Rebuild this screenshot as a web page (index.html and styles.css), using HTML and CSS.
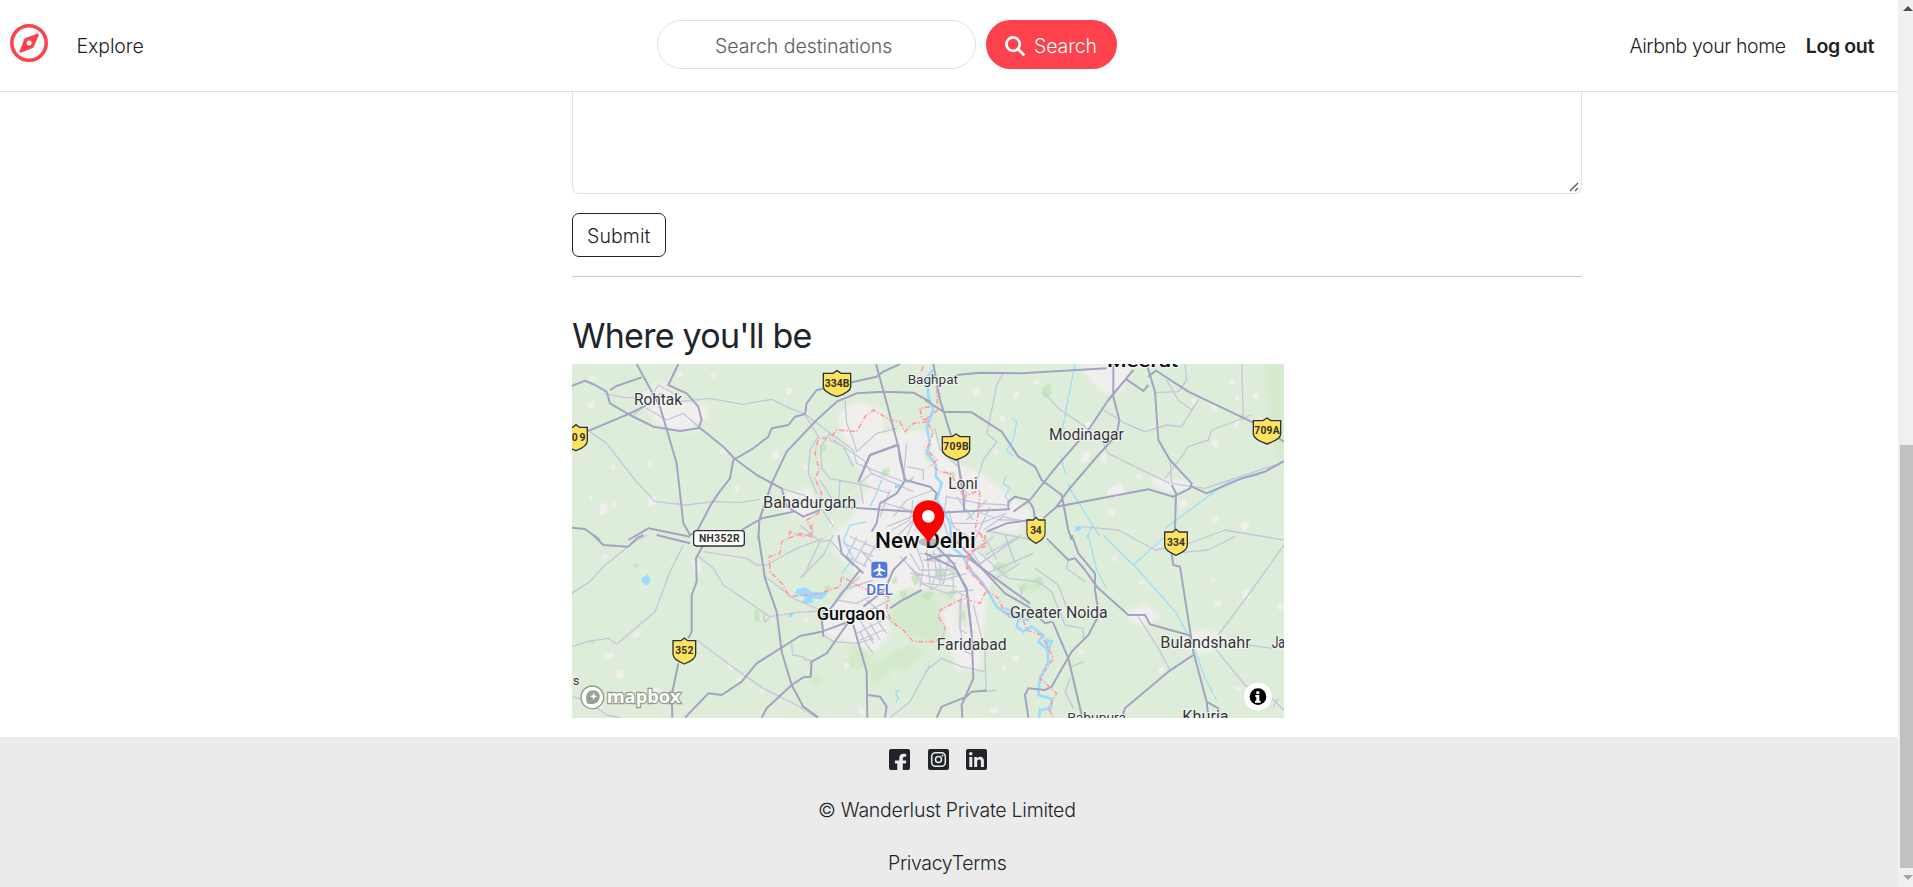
FILE: index.html
```html
<!DOCTYPE html>
<html lang="en">
<head>
<meta charset="utf-8">
<title>Wanderlust</title>
<link rel="stylesheet" href="styles.css">
</head>
<body>
<div class="window">
<div class="page">
  <nav class="navbar">
    <div class="nav-left">
      <svg class="brand" viewBox="0 0 38 38"><circle cx="19" cy="19" r="17.2" fill="none" stroke="#fe424d" stroke-width="3.6"/><path fill="#fe424d" fill-rule="evenodd" d="M27 9.700c1.200-.5 2.200.5 1.700 1.700l-5 11.700a2 2 0 0 1-1 1L11.300 28.600c-1.200.5-2.200-.5-1.700-1.700l4.800-11.800a2 2 0 0 1 1-1zM19.200 16.600a2.500 2.500 0 1 0 .01 0z"/></svg>
      <a class="explore">Explore</a>
    </div>
    <form class="search">
      <div class="search-box"><span>Search destinations</span></div>
      <div class="search-btn"><svg viewBox="0 0 20 20"><circle cx="8.100" cy="8.100" r="6.700" fill="none" stroke="#fff" stroke-width="2.700"/><path d="M13 13l5.500 5.500" stroke="#fff" stroke-width="2.900" stroke-linecap="round"/></svg><span>Search</span></div>
    </form>
    <div class="nav-right"><a class="home">Airbnb your home</a><a class="logout">Log out</a></div>
  </nav>
  <main class="content">
    <div class="comment"><svg viewBox="0 0 10 10"><path d="M1 9l8-8M6 9l3-3" stroke="#555" stroke-width="1.300"/></svg></div>
    <div class="submit"><span>Submit</span></div>
    <hr>
    <h3><span>Where you'll be</span></h3>
    <svg class="map" viewBox="0 0 2136 1062">
      <defs>
        <path id="shield" d="M-41-32L-12-32L0-40L12-32L41-32L41 8C41 22 20 31 0 38C-20 31-41 22-41 8Z"/>
        <path id="shield-s" d="M-34-32L-10-32L0-40L10-32L34-32L34 8C34 22 18 31 0 38C-18 31-34 22-34 8Z"/>
      </defs>
      <rect width="2136" height="1062" fill="#deedd9"/>
      <!-- built-up areas -->
      <g class="urban soft">
        <path transform="translate(684 228)" d="M140 30L190 0L300-30L400-20L450 60L540 100L660 190L700 220L650 280L560 270L520 330L590 370L560 460L540 690L470 690L440 560L400 470L330 440L250 470L270 580L220 640L140 600L60 580L80 500L150 460L180 410L110 340L90 290L150 240L210 140Z"/>
        <path d="M210 90L270 50L320 110L400 120L410 170L350 180L390 200L340 205L250 175ZM1520 0H1680L1650 80L1600 90L1560 50ZM1830 810L1900 795L1960 820L1940 860L1870 870L1830 850ZM1660 742L1720 720L1770 755L1730 785L1680 775ZM1750 340L1840 350L1880 370L1800 385L1740 365ZM640 390L710 370L740 420L710 470L630 440ZM800 150L850 110L940 140L930 220L850 260L810 220Z"/>
      </g>
      <g class="wood soft">
        <path transform="translate(684 228)" d="M290 490L350 450L440 440L480 480L420 520L440 580L390 610L330 590L270 540ZM240 655L330 610L380 640L320 690L240 690ZM370 10L400 30L390 90L375 60ZM590 380L620 370L630 400L600 410ZM240 90L270 80L260 110ZM160 610L230 650L180 690L130 680ZM650 445L700 410L730 440L700 460ZM410 380L440 390L430 420L410 410ZM470 500L510 490L500 570L470 550Z"/>
        <path d="M2080 0H2136V330L2100 220ZM730 930L750 945L760 920L740 970L710 950ZM880 900L930 890L960 930L900 960Z"/>
      </g>
      <g class="grove">
        <path d="M1412 70L1435 55L1440 90L1420 105L1408 90ZM545 740L560 735L564 770L550 775ZM45 830L70 825L65 842ZM182 604l12-8 8 8-8 8-12-2z"/>
        <path transform="translate(684 228)" d="M330 410l25-15 5 30-15 12zM405 395l20-15 12 20-12 18-15-4zM575 385l20-20 30 12-18 22zM245 90l24-8-4 24-20 4zM70 440l20-6 4 16-20 4zM275 420l14-12 4 20-14 4zM440 100l20-6 8 14-20 4zM655 440l20-10 4 20-18 4zM300 455l18-4 2 24-16 4zM445 385l22-4-2 18-16 4zM700 420l20-12 14 20-20 14zM60 20l20-8 0 18-14 6zM360 470l24-16 22 6-18 20zM440 460l20-14 10 14-20 18zM480 520l14-8 4 26-14 4z"/>
      </g>
      <g class="urban">
        <path d="M45 115l20-5 2 22-18 4zM85 420l22-4-3 34-24 4zM122 418l12-7 0 18-10 4zM230 395l22 5-2 20-22 6zM600 265l20-12 2 28-20 6zM640 75l20-4 0 16-14 6zM415 30l14-5-2 16-10 2zM225 290l15 4-5 16-8-3zM120 300l10 5-3 12-10-3zM490 365l14 4-8 16-8-4zM695 300l14 8-6 12-10-6zM50 35l22 3-4 10-16 2zM320 20l12 6-6 14-12-3zM840 150l15-8-2 26-14 2zM770 470l14-4 0 20-12 4zM445 255l14 2-2 14-12-3zM55 395l8 4-2 10-8-2z"/>
        <path transform="translate(1059 -12)" d="M140 85l22-5 3 22-18 10zM265 100l20-8-3 20-15 5zM225 165l16 2-2 20-14-4zM325 60l18-4 0 16-14 3zM480 190l18-8-2 25-14 5zM470 280l25-8-4 30-20 8zM530 285l14-6 2 28-16 4zM800 115l16-2-3 20-12-2zM860 135l16 5-2 16-14-2zM930 110l10-7 4 20-12-3zM860 240l22 0-3 24-18-5zM930 185l14-4-3 18-12 5zM550 385l35-15 18 25-30 18-26-8zM760 425l18-8 12 22-22 8zM550 445l18 4 0 18-18-4zM860 470l18-6 2 20-16 6zM945 490l20-6 10 16-22 12zM500 60l12-8 0 20-8 0zM630 345l20-4 0 18-16-2zM910 60l20-4-3 18-14-2zM985 100l18-2-3 20-15-2zM205 270l12-5 2 16-12 4z"/>
        <path transform="translate(-6 513)" d="M98 58l18 2-4 12-14-2zM190 295l16-10 5 16-20 8zM105 355l24-2 6 14-28 6zM140 410l22-4-2 24-20 0zM500 430l14-4-2 18-14 0zM365 80l22-6 8 30-20 12zM472 390l16-3 2 14-12 4zM822 385l18-2-4 18-14 2zM1010 120l16-3-2 14-12 3zM570 465l18-4-8 16-12-4zM865 510l18 12 0 18-18-8zM250 460l20-2-3 12-17 2zM700 250l14-3 0 14-12-2zM85 510l12-5 5 14-15 6z"/>
        <path transform="translate(1059 513)" d="M640 140l16-5 2 10-16 4zM560 65l16-6 0 20-12-2zM950 170l22-10 5 28-22 5zM870 200l18-6-3 20-18 3zM700 400l16-5-2 20-12-2zM260 365l20-4 2 18-16 2zM195 520l20-8 5 20-22 6zM460 345l14 0 4 12-16 0zM230 395l12-4 5 16-14 0zM860 470l12-5 0 20-10 4zM1055 210l20-8 0 26-14-4zM860 130l14 4-4 10-12-4zM930 455l20 2-3 10-17 0z"/>
      </g>
      <!-- rivers and lakes -->
      <g class="lake">
        <path d="M210 640L222 636L226 630L232 640L236 642L230 660L222 664L208 652ZM675 674L700 670L720 685L770 685L750 706L720 704L725 716L700 720L690 714L700 700L668 690ZM650 750L662 746L662 760L650 760ZM1510 490q10-10 20 0q-5 15-20 10Z"/>
        <path d="M325 120L345 105L335 125L318 130ZM285 135L300 130L300 142L285 145Z" transform="translate(684 228)"/>
      </g>
      <g class="river">
        <path stroke-width="8" transform="translate(684 228)" d="M400-210L382-190L385-130L400-90L380-40L390 10L380 40L408 75L408 110L425 130L410 180L430 210L450 250L455 320L490 350L510 390L545 425L570 465L590 500L630 530L690 540"/>
        <path stroke-width="8" transform="translate(1059 513)" d="M240 220L285 240L275 275L295 290L320 275L355 300L340 320L370 345L380 320L365 315L370 380L345 430L340 480L380 492L378 520L345 525L340 560"/>
        <path stroke-width="3.500" transform="translate(1059 -12)" d="M450 10L408 230M408 288L420 340M428 370L440 395L525 530M260 175L275 185L265 240L245 270L265 290M245 345L235 370L255 385L240 410L260 430M1005 345L910 365L720 505M505 490L485 535"/>
        <path stroke-width="3.500" transform="translate(1059 513)" d="M490 0L515 105L545 160M535 0L640 105L755 235L805 330L840 430L875 495M720 5L625 90"/>
        <path stroke-width="4" transform="translate(684 228)" d="M200 245L150 255L130 300L160 355L125 400M245 120L230 160L210 200"/>
        <path stroke-width="4" d="M968 980l10 0-6 12 8 10-8 12"/>
      </g>
      <!-- local roads -->
      <g class="minor">
        <path transform="translate(-6 -12)" d="M100 100L160 112L240 115L265 75L320 105M190 165L270 100L330 125L420 115L520 133L605 118L660 145L705 162L760 205L850 270L860 310L960 350L1000 365M60 215L110 250L195 360L255 425L350 435L430 425L510 428L570 418M825 120L830 190L850 240L860 275L920 220L980 205M780 220L752 260L755 325L780 355L880 375L960 400M705 165L745 230L720 270L715 340L740 400M635 385L700 405L750 440L790 500M230 145L290 180L340 160L385 200M810 360L805 440"/>
        <path transform="translate(1059 -12)" d="M235 40L215 75L200 150L185 220L215 245L175 300L155 365M360 100L400 145L480 200L535 250L550 280L640 325L735 370M780 12L785 60L760 95L690 98M950 12L955 180M725 60L760 120L800 150L820 120L770 200L725 195L660 215L600 190L535 150M720 355L770 290L790 260L850 240L860 210L980 165M740 370L840 385L960 345L1050 315M740 370L735 300L705 250M30 205L45 270L100 320L110 400M470 500L580 510L690 570L780 555L900 510L1077 540"/>
        <path transform="translate(-6 513)" d="M5 175L60 140L100 95L180 30L230 0M340 30L300 110L255 230L140 328L115 310L50 320L5 335M380 60L430 100L460 150L600 245L680 232L800 225M400 50L530 70L560 90L590 90L680 40L760 10M600 245L585 262L580 235M580 120L670 190L750 225M380 315L480 390L580 460L680 510L740 548M665 325L668 360L700 365L705 375L720 375L720 390M690 130L760 60L790 0M755 230L760 300L790 320L860 325L910 310M870 290L890 330L910 355M1080 390L1020 500L960 548M5 485L50 495L110 540L150 548"/>
        <path transform="translate(1059 513)" d="M880 300L970 180L1077 30M870 340L960 450L1040 490L1077 525M1060 490L1045 515M640 245L700 340L735 405M740 55L850 45L930 5M970 330L1040 340M180 60L290 0M160 50L250 130L340 140L380 170L420 270L475 280L475 310M330 100L400 150L430 230L510 250M240 0L270 85M290 155L290 180M440 395L475 380M435 430L420 470L445 520M0 410L50 370L110 395L180 410M110 180L105 280L120 350L145 360M145 210L180 350L183 465L140 470M215 465L180 470M430 70L425 100L480 140"/>
        <path transform="translate(684 228)" d="M100 0L190 60L215 100L340 155M160 80L130 20L90 0M215 100L180 130L190 190M310 120L320 10M370 120L370 90L320 80M270 150L240 230M240 185L340 215M280 230L320 180L400 150M275 270L330 240L340 180M300 200L350 220L320 290M260 260L360 220M280 300L340 240L410 250M440 170L540 190L620 195M445 210L460 260L520 300M490 210L500 160L480 110M500 240L560 180M520 210L600 240L660 240M450 250L540 250L620 220M550 270L610 230L700 250M440 165L430 240L450 310M470 170L520 240M570 200L520 310M570 275L700 300M300 350L350 400L430 420L500 400M330 340L360 390L450 390M320 370L370 430L470 440M350 320L370 380L360 440M380 330L390 430M400 330L410 400L390 450M420 330L420 430M450 340L430 430L390 450M360 340L460 350M370 360L470 370M330 400L400 410L480 400M460 400L460 450L500 470M360 430L440 460L520 450M540 370L600 330L660 290M500 350L580 290M530 380L640 300M560 400L700 340M580 420L660 370M520 340L550 390M560 300L590 360M130 310L220 350M150 290L240 330M120 340L200 380M170 290L140 350M200 300L160 370M230 310L190 380M180 330L230 380M0 255L60 305L90 300L160 380M60 305L10 410M60 120L110 200L170 205M100 500L120 460L180 410M110 480L170 490L210 470M130 450L220 420M140 540L230 500L270 480M200 480L270 540M170 580L250 540M180 600L250 570M210 550L240 600M190 560L220 600M230 540L260 580M180 540L220 610M480 480L480 570L500 580"/>
      </g>
      <!-- highways -->
      <g class="major">
        <path transform="translate(-6 -12)" d="M200 12L270 140L320 310L340 490L360 525L380 515L425 430L445 400L480 355L490 300L550 265L595 230L605 205L655 195L675 170L705 162L710 130L740 90L920 50L940 35L990 12M5 78L45 62L75 75L110 95L120 130L180 165L250 200L330 213L385 205L395 180L385 140L350 100L295 75L325 12M120 90L140 78L215 52M50 215L180 160L240 130M385 200L410 220L460 260L495 297L560 345L635 385L650 440L700 470L750 450M565 540L568 480L605 370L650 275L740 180L800 125L860 100L940 95L1030 98L1080 125M918 12L945 110L985 260L1005 360M865 365L900 285L980 255M5 503L45 507L90 540M175 540L235 505L360 530M515 510L575 475L670 455"/>
        <path transform="translate(1059 -12)" d="M95 45L165 38L290 40L545 25M25 12L45 120L95 280L115 400L118 455M0 120L55 155L140 157L230 215L280 290L330 320L350 360L410 405L430 510L440 540M625 30L550 120L490 210L390 325L315 420L265 455M565 12L565 110L583 180L575 225L520 285L430 390L395 440M665 12L690 95L700 240L735 300L800 370L795 385L745 410L670 388L395 440L355 475M690 30L790 95L990 190L1077 245M1077 303L1020 335L950 355L845 400L800 380M600 55L655 93L670 75M670 50L695 30M740 375L753 400L750 510M250 450L250 425L270 410L310 420L325 445L330 480"/>
        <path transform="translate(-6 513)" d="M70 0L100 30L175 35L200 10L220 0M260 0L360 25M400 30L378 70L380 140L365 180L365 290L355 310M325 385L305 480L307 548M565 0L585 130L620 230L635 350L665 450L700 515L745 548M345 548L415 475L455 480L515 440L560 385L690 303L755 290L850 255M575 548L590 520L665 450L700 427L722 425L725 380L770 355L850 240M850 270L890 410L892 548M895 480L930 485L950 515L945 548"/>
        <path transform="translate(1059 513)" d="M365 10L430 75L450 70L480 105L515 155L610 240L660 240L675 268L800 303M440 0L460 55L510 115L510 165L522 240L490 300L440 350L405 410L380 455L360 465L310 460L300 480L310 548M740 55L745 90L765 95L805 350L845 500L880 520L885 548M845 500L850 548M805 360L730 410L600 520L590 548M0 55L90 100L125 160L140 300L145 430L110 510L112 548M185 467L140 470L125 485L50 515L35 548M95 20L240 175L310 215L360 265L380 260M383 260L430 370L470 540"/>
        <path transform="translate(684 228)" d="M70 590L65 540L180 390M115 285L125 340L190 400M175 125L210 45L295 15L300 60L315 120L390 140L410 160L405 180M315 122L290 160L240 190L230 250L215 275M110 200L340 215M410 218L630 208M560 275L620 250L690 240M365 450L300 485L270 505M380 360L430 345L500 350L620 440L690 490M320 350L280 390L255 450L190 500M410 320L460 370L500 450L515 580"/>
      </g>
      <!-- state border -->
      <g class="bound">
        <path transform="translate(-6 -12)" d="M1060 20L1050 40M1080 140L1050 145L1055 175L1080 185L1030 190L1005 215L990 185L960 180L910 150L885 170L860 215L800 210L780 235L745 235L735 280L748 330L735 355L755 400L745 460L710 480L730 520L700 530L660 515L655 540"/>
        <path transform="translate(1059 -12)" d="M35 85L38 150L0 180L25 215L5 270L35 300L20 315L45 335L75 340L95 370L115 410L165 390L160 460L150 510L185 535"/>
        <path transform="translate(684 228)" d="M540 280L555 310L520 330L500 370L560 450L540 490L490 475L420 510L415 530L435 560L430 590L400 605L340 605L310 570L275 545L260 510L265 470L190 445L125 410L120 440L60 460L-30 470L-55 430L-90 395L-92 350L-60 340L-55 305L0 280L35 290L35 250"/>
        <path transform="translate(1059 513)" d="M180 0L180 35L130 50L125 100L190 170L220 190L240 235L290 240L305 285L350 300L385 370L345 430L395 475L370 520L385 548"/>
      </g>
      <!-- route badges -->
      <g class="badge">
        <g transform="translate(795 60)"><use href="#shield"/><text x="-37" y="9" textLength="74">334B</text></g>
        <g transform="translate(6 222)"><use href="#shield-s" x="6"/><text x="-30" y="9" textLength="64">709</text></g>
        <g transform="translate(1152 250)"><use href="#shield"/><text x="-38" y="9" textLength="76">709B</text></g>
        <g transform="translate(2085 202)"><use href="#shield"/><text x="-38" y="9" textLength="76">709A</text></g>
        <g transform="translate(1392 500)"><use href="#shield-s" transform="scale(.8 1)"/><text x="-17" y="9" textLength="34">34</text></g>
        <g transform="translate(1812 536)"><use href="#shield-s"/><text x="-27" y="9" textLength="54">334</text></g>
        <g transform="translate(337 862)"><use href="#shield-s"/><text x="-27" y="9" textLength="54">352</text></g>
        <rect x="365" y="500" width="152" height="46" rx="8" class="plate"/><text x="381" y="533" textLength="122">NH352R</text>
      </g>
      <!-- place names -->
      <g class="town">
        <text x="186" y="124" textLength="144" lengthAdjust="spacingAndGlyphs">Rohtak</text>
        <text x="1007" y="60" textLength="151" lengthAdjust="spacingAndGlyphs" font-size="41">Baghpat</text>
        <text x="1431" y="227" textLength="224" lengthAdjust="spacingAndGlyphs">Modinagar</text>
        <text x="1129" y="375" textLength="88" lengthAdjust="spacingAndGlyphs">Loni</text>
        <text x="573" y="431" textLength="280" lengthAdjust="spacingAndGlyphs">Bahadurgarh</text>
        <text x="1314" y="763" textLength="293" lengthAdjust="spacingAndGlyphs">Greater Noida</text>
        <text x="1094" y="857" textLength="210" lengthAdjust="spacingAndGlyphs">Faridabad</text>
        <text x="1765" y="853" textLength="271" lengthAdjust="spacingAndGlyphs">Bulandshahr</text>
        <text x="2099" y="853" textLength="100" lengthAdjust="spacingAndGlyphs">Jahan</text>
        <text x="1486" y="1073" textLength="176" lengthAdjust="spacingAndGlyphs" font-size="41">Rabupura</text>
        <text x="1831" y="1073" textLength="139" lengthAdjust="spacingAndGlyphs">Khurja</text>
        <text x="2" y="962" font-size="39">s</text>
      </g>
      <g class="city">
        <text x="1605" y="10" textLength="214" lengthAdjust="spacingAndGlyphs" font-size="56">Meerut</text>
        <text x="734" y="767" textLength="206" lengthAdjust="spacingAndGlyphs" font-size="53">Gurgaon</text>
        <text x="909" y="551" textLength="302" lengthAdjust="spacingAndGlyphs" font-size="66">New Delhi</text>
      </g>
      <rect x="898" y="593" width="48" height="48" rx="9" fill="#5379d8"/><path fill="#fff" d="M922 599c3 0 3 3 3 7v6l15 8v4l-15-4v9l6 4v3l-9-2-9 2v-3l6-4v-9l-15 4v-4l15-8v-6c0-4 0-7 3-7z"/>
      <text class="airport" x="883" y="693" textLength="80" lengthAdjust="spacingAndGlyphs">DEL</text>
      <!-- location marker -->
      <ellipse cx="1070" cy="534" rx="30" ry="13" fill="#555" opacity=".35"/>
      <path fill="#f00" d="M1070 409C1044 409 1022 430 1022 457C1022 490 1052 508 1070 536C1088 508 1117 490 1117 457C1117 430 1096 409 1070 409Z"/><circle cx="1069" cy="457" r="19" fill="#fff"/>
      <g class="logo"><circle cx="61" cy="1000" r="34" fill="#fff" stroke="#8d9b89" stroke-width="4"/><path fill="#96a391" d="M45 1018C38 994 45 979 63 979C91 979 90 1018 61 1020C52 1021 47 1019 45 1018Z"/><path fill="#fff" d="M65 985l3 9 9 3-9 3-3 9-3-9-9-3 9-3z"/><text x="104" y="1016" textLength="222" lengthAdjust="spacingAndGlyphs">mapbox</text></g>
      <circle cx="2058" cy="998" r="42" fill="#fff"/><circle cx="2058" cy="998" r="25"/><path fill="#fff" d="M2053 982h9v8h-9zM2050 993h12v17h4v6h-17v-6h4v-11h-3z"/>
    </svg>
  </main>
  <footer>
    <div class="social">
      <svg viewBox="0 0 21 21"><path fill="#212529" fill-rule="evenodd" d="M2 0h17q2 0 2 2v17q0 2-2 2h-5.200v-6.500h3l.5-3h-3.500V9.800c0-1.500.7-2.100 2.200-2.100h1.200V5c-4.700-1-6.900.3-6.900 4.300v2.200H5.900v3h2.400V21H2q-2 0-2-2V2q0-2 2-2z"/></svg>
      <svg viewBox="0 0 21 21"><rect width="21" height="21" rx="2" fill="#212529"/><rect x="3.700" y="3.700" width="13.600" height="13.600" rx="3.700" fill="none" stroke="#ebebeb" stroke-width="1.500"/><circle cx="10.500" cy="10.500" r="3" fill="none" stroke="#ebebeb" stroke-width="1.500"/><circle cx="14.500" cy="6.500" r="1" fill="#ebebeb"/></svg>
      <svg viewBox="0 0 21 21"><rect width="21" height="21" rx="2" fill="#212529"/><circle cx="4.800" cy="4.800" r="1.700" fill="#ebebeb"/><path fill="#ebebeb" d="M3.300 8h3v10h-3zM8.200 8H11v1.400c1.700-2.700 6.900-2 6.900 2.400V18h-3v-5.500c0-2.700-3.700-2.600-3.700 0V18h-3z"/></svg>
    </div>
    <div class="copy"><span>© Wanderlust Private Limited</span></div>
    <div class="links"><span><a>Privacy</a><a>Terms</a></span></div>
  </footer>
</div>
<div class="scrollbar"><i class="up"></i><div class="thumb"></div><i class="down"></i></div>
</div>
</body>
</html>
```
FILE: styles.css
```css
* { box-sizing: border-box; }
body { margin: 0; background: #fff; color: #212529; font: 300 19.5px/30px Inter, "Open Sans", sans-serif; overflow: hidden; }
a, span { white-space: nowrap; }
.window { display: flex; height: 887px; }
.page { width: 1898px; display: flex; flex-direction: column; }
.navbar { height: 92px; flex: none; border-bottom: 1px solid #dee2e6; display: grid; grid-template-columns: 657px 460px 1fr; align-items: start; background: #fff; color: #222; }
.nav-left { display: flex; padding-left: 10px; }
.brand { width: 38px; height: 38px; margin-top: 24px; margin-right: 28.5px; }
.explore, .nav-right { padding-top: 31px; }
.explore { letter-spacing: -.1px; }
.search { display: flex; gap: 10px; padding-top: 20px; }
.search-box { width: 319px; height: 49px; border: 1px solid #dee2e6; border-radius: 25px; padding: 10px 0 0 57px; color: #595c5f; letter-spacing: -.05px; }
.search-btn { width: 131px; height: 49px; border-radius: 25px; background: #fe424d; color: #fff; padding: 11px 0 0 19px; display: flex; letter-spacing: -.1px; }
.search-btn svg { width: 20px; height: 20px; margin: 5px 9px 0 0; }
.nav-right { display: flex; justify-content: flex-end; gap: 20px; padding-right: 24px; }
.logout { font-weight: 600; letter-spacing: -.35px; }
.home { letter-spacing: -.4px; }
.content { padding: 0 316px 0 572px; height: 645px; flex: none; }
.comment { height: 102px; border: 1px solid #dee2e6; border-top: 0; border-radius: 0 0 7px 7px; display: flex; align-items: flex-end; justify-content: flex-end; padding: 1px 2px; }
.comment svg { width: 10px; height: 10px; }
.submit { width: 94px; height: 44px; margin-top: 19px; border: 1px solid #212529; border-radius: 7px; padding: 7px 0 0 14px; letter-spacing: .1px; }
hr { margin: 19px 0 0; border: 0; border-top: 1px solid #c7c8c9; }
h3 { margin: 38px 0 0; height: 49px; font-size: 34px; line-height: 42px; font-weight: 400; letter-spacing: -.75px; }
.map { display: block; width: 712px; height: 354px; overflow: hidden; font-family: Roboto, sans-serif; }
.urban { fill: #f1efee; }
.wood { fill: #c9e6bd; opacity: .45; }
.grove { fill: #c6e5ba; opacity: .85; }
.soft { filter: blur(7px); }
.lake { fill: #99dcff; }
.river { fill: none; stroke: #99dcff; }
.minor { fill: none; stroke: #c3c7da; stroke-width: 4; stroke-linejoin: round; }
.major { fill: none; stroke: #a1a4c2; stroke-width: 6; stroke-linejoin: round; }
.bound { fill: none; stroke: #ff9bab; stroke-width: 5; stroke-dasharray: 16 6 4 6; }
.badge use { fill: #ffe25e; stroke: #30303a; stroke-width: 4; }
.plate { fill: #fff; stroke: #30303a; stroke-width: 4; }
.badge text { font-size: 31px; font-weight: 700; fill: #33322d; }
.town { font-size: 48px; font-weight: 400; fill: #34343c; stroke: #f6f8f4; stroke-width: 5; paint-order: stroke; }
.city { font-weight: 500; fill: #0b0b0d; stroke: #f6f8f4; stroke-width: 5; paint-order: stroke; }
.airport { font-size: 46px; font-weight: 500; fill: #4a6fd6; stroke: #fff; stroke-width: 4; paint-order: stroke; }
.logo text { font: 700 54px "Open Sans", sans-serif; fill: #fff; stroke: #8d9b89; stroke-width: 7; paint-order: stroke; }
footer { height: 150px; flex: none; background: #ebebeb; padding-top: 12px; }
.social { display: flex; gap: 17.5px; padding-left: 889px; height: 21px; }
.social svg { width: 21px; height: 21px; }
.copy { padding: 25px 0 0 818px; letter-spacing: -.25px; }
.links { padding: 23px 0 0 888px; letter-spacing: -.35px; }
.scrollbar { width: 15px; background: #f0f0f0; padding-left: 2px; display: flex; flex-direction: column; overflow: hidden; }
.up, .down { flex: none; width: 0; height: 0; margin-left: 3px; border: 5px solid transparent; }
.up { margin-top: 1px; border-bottom-color: #505050; }
.thumb { flex: none; width: 15px; height: 423px; margin-top: 434px; background: #c1c1c1; }
.down { margin-top: 7px; border-top-color: #a3a3a3; }
```
